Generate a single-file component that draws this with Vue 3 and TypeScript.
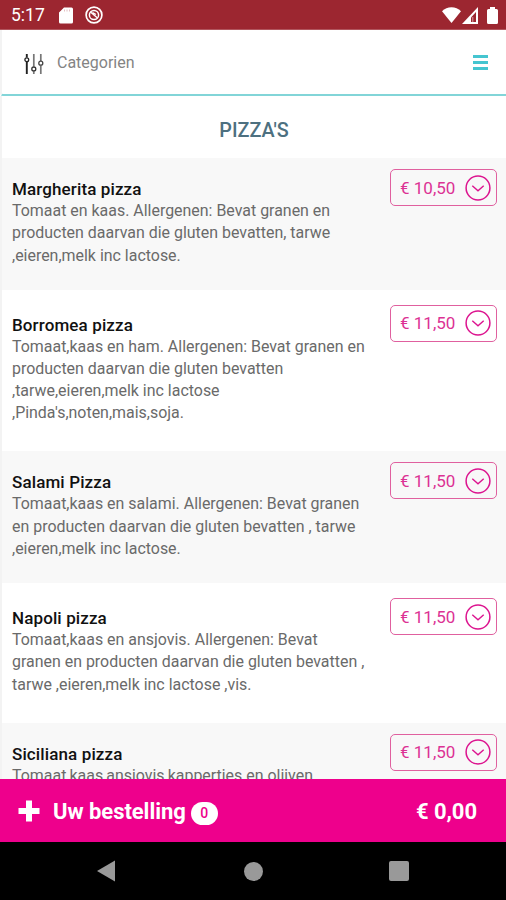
<script setup lang="ts">
interface MenuItem {
  name: string
  price: string
  description: string[]
}

const items: MenuItem[] = [
  {
    name: 'Margherita pizza',
    price: '€ 10,50',
    description: ['Tomaat en kaas. Allergenen: Bevat granen en', 'producten daarvan die gluten bevatten, tarwe', ',eieren,melk inc lactose.'],
  },
  {
    name: 'Borromea pizza',
    price: '€ 11,50',
    description: ['Tomaat,kaas en ham. Allergenen: Bevat granen en', 'producten daarvan die gluten bevatten', ',tarwe,eieren,melk inc lactose', ",Pinda's,noten,mais,soja."],
  },
  {
    name: 'Salami Pizza',
    price: '€ 11,50',
    description: ['Tomaat,kaas en salami. Allergenen: Bevat granen', 'en producten daarvan die gluten bevatten , tarwe', ',eieren,melk inc lactose.'],
  },
  {
    name: 'Napoli pizza',
    price: '€ 11,50',
    description: ['Tomaat,kaas en ansjovis. Allergenen: Bevat', 'granen en producten daarvan die gluten bevatten ,', 'tarwe ,eieren,melk inc lactose ,vis.'],
  },
  {
    name: 'Siciliana pizza',
    price: '€ 11,50',
    description: ['Tomaat,kaas,ansjovis,kappertjes en olijven.'],
  },
]
</script>

<template>
  <div class="screen">
    <header class="status">
      <span class="clock">5:17</span>
      <svg class="sd" width="14" height="17" viewBox="0 0 14 17"><path d="M5 .5h7.500A1.500 1.500 0 0 1 14 2v13a1.500 1.500 0 0 1-1.500 1.500h-11A1.500 1.500 0 0 1 0 15V5.500z" fill="#fff" /><path d="M5.500 2.500v2M8 2.500v2M10.500 2.500v2" stroke="#e3c0c3" stroke-width="1" /></svg>
      <svg class="ring" width="18" height="18" viewBox="0 0 18 18" fill="none" stroke="#fff"><circle cx="9" cy="9" r="7.900" stroke-width="1.700" /><circle cx="9" cy="9" r="4.600" stroke-width="1.500" /><path d="M5.500 6l7 6M7.500 6.500l3.500 2" stroke-width="1.400" /></svg>
      <span class="fill"></span>
      <svg width="19" height="16" viewBox="0 0 19 16"><path d="M0 4.200C5-1 14-1 19 4.200L9.500 16z" fill="#fff" /></svg>
      <svg class="signal" width="16" height="17" viewBox="0 0 16 17"><path d="M16 0v17H0z" fill="#fff" /><path d="M14 5v10H9v-4.500z" fill="#9c2630" /><path d="M10.800 10v5" stroke="#d9a4a8" /></svg>
      <svg class="battery" width="11" height="17" viewBox="0 0 11 17"><path d="M3 0h5v2h1.500A1.500 1.500 0 0 1 11 3.500v12A1.500 1.500 0 0 1 9.500 17h-8A1.500 1.500 0 0 1 0 15.500v-12A1.500 1.500 0 0 1 1.500 2H3z" fill="#fff" /></svg>
    </header>

    <nav class="categories">
      <svg width="20" height="20" viewBox="0 0 20 20" fill="none">
        <g stroke="#222" stroke-width="1.900"><path d="M2.800 0v3.500M2.800 8v12" /><circle cx="2.800" cy="5.800" r="1.900" stroke-width="1.300" /></g>
        <g stroke="#777" stroke-width="1.700"><path d="M9.800 0v12.500M9.800 17.500v2.500" /><circle cx="9.800" cy="15" r="2" stroke="#333" stroke-width="1.300" /></g>
        <g stroke="#777" stroke-width="1.700"><path d="M16.800 0v7M16.800 11.500v8.500" /><circle cx="16.800" cy="9.200" r="2" stroke="#444" stroke-width="1.300" /></g>
      </svg>
      <span class="label">Categorien</span>
      <span class="burger"><i></i><i></i><i></i></span>
    </nav>

    <main class="menu">
      <h1>PIZZA'S</h1>
      <article v-for="item in items" :key="item.name" class="item">
        <div class="text">
          <h2>{{ item.name }}</h2>
          <p v-for="line in item.description" :key="line">{{ line }}</p>
        </div>
        <button class="price">
          <span>{{ item.price }}</span>
          <svg width="26" height="26" viewBox="0 0 26 26" fill="none" stroke="#dc148f"><circle cx="13" cy="13" r="11.900" stroke-width="1.500" /><path d="M7.300 10.700l5.700 5 5.700-5" stroke-width="1.400" /></svg>
        </button>
      </article>
    </main>

    <footer class="order">
      <svg width="22" height="22" viewBox="0 0 22 22"><path d="M8 .5h6v7.500h7.500v6H14v7.500H8V14H.5V8H8z" fill="#fff" /></svg>
      <span class="title">Uw bestelling</span>
      <span class="badge">0</span>
      <span class="total">€ 0,00</span>
    </footer>

    <div class="system">
      <svg width="18" height="22" viewBox="0 0 18 22"><path d="M18 .5v21L0 11z" fill="#999" /></svg>
      <span class="home"></span>
      <span class="recent"></span>
    </div>
  </div>
</template>

<style>
body { margin: 0; overflow: hidden; }
</style>

<style scoped>
* { box-sizing: border-box; }
.screen { width: 506px; height: 900px; display: flex; flex-direction: column; background: #fff; font-family: Roboto, sans-serif; overflow: hidden; }
.status { flex: none; height: 30px; display: flex; align-items: center; padding: 1px 8px 0 11px; background: #9c2630; border-bottom: 1px solid #b1555d; color: #fff; }
.clock { width: 48px; font-size: 17.500px; line-height: 20px; }
.ring { margin-left: 12px; }
.fill { flex: 1; }
.signal { margin-left: 1px; }
.battery { margin-left: 9px; }
.categories { flex: none; height: 65.500px; display: flex; align-items: center; padding: 3px 18px 0 25px; border-left: 2px solid #f3f3f3; border-bottom: 2px solid #82d5d8; border-bottom-left-radius: 3px; }
.categories svg { margin: 1px 0 0 -3px; }
.label { margin-left: 13px; flex: 1; font-size: 16px; color: #848484; line-height: 20px; }
.burger { display: flex; flex-direction: column; gap: 3px; width: 15px; margin-top: -1px; }
.burger i { height: 3px; background: #45c5d0; }
.menu { flex: 1; min-height: 0; overflow: hidden; border-left: 2px solid #f3f3f3; }
h1 { margin: 0; height: 62.500px; padding-top: 24.500px; font-size: 19.800px; line-height: 22px; font-weight: 500; text-align: center; color: #4d7080; }
.item { display: flex; justify-content: space-between; align-items: flex-start; margin-bottom: 3.700px; padding: 11px 9px 23px 10px; }
.item:nth-of-type(odd) { background: #f8f8f8; }
.text { padding-top: 10px; white-space: nowrap; }
h2 { margin: 0; font-size: 17px; line-height: 21px; font-weight: 500; letter-spacing: 0.120px; color: #111; }
p { margin: 0; font-size: 15.950px; line-height: 22.300px; color: #6a6a6a; }
.price { width: 107px; height: 37px; flex: none; display: flex; align-items: center; justify-content: space-between; padding: 0 5px 0 9px; background: transparent; border: 1.500px solid #e0609f; border-radius: 5px; color: #dc3294; font: 17px/20px Roboto, sans-serif; }
.order { flex: none; height: 63px; display: flex; align-items: center; padding: 1px 29px 0 18px; background: #ee008c; color: #fff; font-weight: 700; font-size: 22px; letter-spacing: -0.050px; }
.title { margin-left: 13px; }
.badge { width: 27px; height: 23px; margin: 4px 0 0 5px; border-radius: 12px; background: #fff; color: #ee008c; font-size: 14px; font-weight: 500; line-height: 23px; text-align: center; }
.total { margin-left: auto; }
.system { flex: none; height: 58px; display: flex; align-items: center; justify-content: space-between; padding: 0 97px; background: #000; }
.home { width: 19px; height: 19px; margin-left: 2px; border-radius: 50%; background: #999; }
.recent { width: 20px; height: 20px; border-radius: 2px; background: #999; }
</style>
